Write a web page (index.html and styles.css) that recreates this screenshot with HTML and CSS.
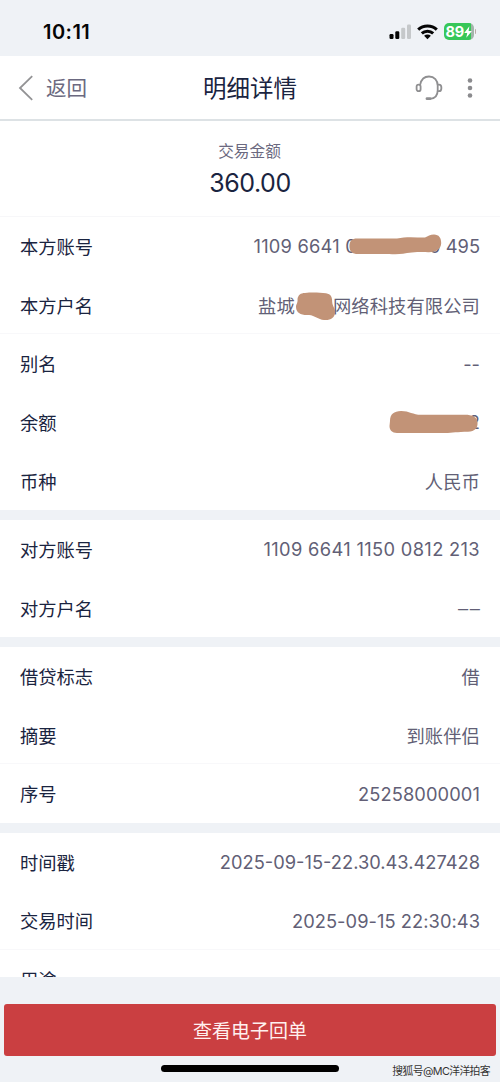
FILE: index.html
```html
<!DOCTYPE html>
<html lang="zh-CN">
<head>
<meta charset="utf-8">
<title>明细详情</title>
<link rel="stylesheet" href="styles.css">
</head>
<body>
<div class="screen">
  <div class="status">
    <span class="clock">10:11</span>
    <svg class="signal" width="24" height="16" viewBox="0 0 24 16">
      <rect x="0.5" y="10" width="4" height="5" rx="1.2" fill="#050505"/>
      <rect x="6.3" y="7.2" width="4" height="7.8" rx="1.2" fill="#050505"/>
      <rect x="12.2" y="3.8" width="4" height="11.2" rx="1.2" fill="#c5c8ca"/>
      <rect x="18" y="0.5" width="4" height="14.5" rx="1.2" fill="#c5c8ca"/>
    </svg>
    <svg class="wifi" width="21" height="16" viewBox="0 0 21 16">
      <g fill="none" stroke="#050505" stroke-width="3">
        <path d="M1.2 5.7C6.4 .7 14.6 .7 19.8 5.7"/>
        <path d="M4.8 9.4C8 6.4 13 6.4 16.2 9.4"/>
      </g>
      <path d="M7.1 11.8C9 10.1 12 10.1 13.9 11.8L10.5 15.2Z" fill="#050505"/>
    </svg>
    <div class="battery">
      <span>89</span>
      <svg width="8" height="12" viewBox="0 0 8 12"><path d="M5.4 0.3L0.2 6.9H3.2L2.3 11.7L7.9 4.9H4.6Z" fill="#fff"/></svg>
    </div>
    <i class="battery-tip"></i>
  </div>

  <div class="nav">
    <div class="back">
      <svg width="16" height="26" viewBox="0 0 16 26"><path d="M14.2 1.2L2 13L14.2 24.8" fill="none" stroke="#939395" stroke-width="1.8"/></svg>
      <span>返回</span>
    </div>
    <h1>明细详情</h1>
    <div class="actions">
      <svg width="28" height="26" viewBox="0 0 28 26">
        <g fill="none" stroke="#8f8f91" stroke-width="1.8" stroke-linecap="round">
          <path d="M5.2 9.7C6.2 4.5 9.6 1.5 14 1.5C19.4 1.5 22.7 5.3 22.7 10.6V15.2C22.7 20.6 19.6 23.5 15 23.8"/>
          <rect x="1.6" y="9.6" width="4" height="6.6" rx="2"/>
          <path d="M22.8 9.6H24C25.6 9.6 26.4 10.8 26.4 12.9S25.6 16.2 24 16.2H22.8"/>
        </g>
        <path d="M12 23.7H15" stroke="#8f8f91" stroke-width="2.8" stroke-linecap="round"/>
      </svg>
      <svg class="more" width="6" height="20" viewBox="0 0 6 20" fill="#8b8b8e"><circle cx="3" cy="2.5" r="2.3"/><circle cx="3" cy="10" r="2.3"/><circle cx="3" cy="17.5" r="2.3"/></svg>
    </div>
  </div>

  <div class="content">
    <div class="amount">
      <div class="caption">交易金额</div>
      <div class="sum">360.00</div>
    </div>

    <div class="group">
      <div class="row"><span class="label">本方账号</span>
        <div class="value masked account"><span class="head">1109 6641 0</span><span>0 495</span>
          <svg class="mask mask-account" width="94" height="21" viewBox="0 0 94 21"><path d="M9 4.5H49C58 2.5 67 3.5 77 3.5C80 2 82 .5 86 .5C91 .5 93.2 4 93.2 9C93.2 15 88 18.5 80 18.2C71 17.8 61 18.5 55 19.7C50 20.5 43 20 34 20H10C4.2 20 1.4 17.3 1.4 12.2S4 4.5 9 4.5Z" fill="#c29377"/></svg>
        </div>
      </div>
      <div class="row line"><span class="label">本方户名</span>
        <div class="value text masked holder"><span>盐城</span><span>网络科技有限公司</span>
          <svg class="mask mask-name" width="42" height="29" viewBox="0 0 42 29"><path d="M10 1C17 .2 25 .7 31 1.2C36 2 37.2 5 37.2 10C37.4 14 40.2 16.4 40.2 20C39.8 26 35.5 28.5 29 28C23 27.5 20 23.5 14 23C6 23.5 1.2 21 1 15C1 12 3 11 2.5 7C3.2 3 5.5 1 10 1Z" fill="#c29377"/></svg>
        </div>
      </div>
      <div class="row"><span class="label">别名</span><div class="value">--</div></div>
      <div class="row"><span class="label">余额</span>
        <div class="value masked">2
          <svg class="mask mask-balance" width="90" height="24" viewBox="0 0 90 24"><path d="M1 11C1 4 5 1 12 .9C20 .8 24 4.7 32 4.8H76C83 4.8 88 7 88.5 12C89 18 86 21.5 79 21.7C68 21.8 64 22.7 56 23H8C3 23 .5 20 .5 16Z" fill="#c29377"/></svg>
        </div>
      </div>
      <div class="row"><span class="label">币种</span><div class="value text">人民币</div></div>
    </div>

    <div class="group">
      <div class="row"><span class="label">对方账号</span><div class="value peer">1109 6641 1150 0812 213</div></div>
      <div class="row"><span class="label">对方户名</span><div class="value longdash">––</div></div>
    </div>

    <div class="group">
      <div class="row"><span class="label">借贷标志</span><div class="value text">借</div></div>
      <div class="row line"><span class="label">摘要</span><div class="value text">到账伴侣</div></div>
      <div class="row"><span class="label">序号</span><div class="value serial">25258000001</div></div>
    </div>

    <div class="group">
      <div class="row"><span class="label">时间戳</span><div class="value">2025-09-15-22.30.43.427428</div></div>
      <div class="row line"><span class="label">交易时间</span><div class="value time">2025-09-15 22:30:43</div></div>
      <div class="row"><span class="label">用途</span></div>
    </div>
  </div>

  <div class="footer">
    <div class="receipt">查看电子回单</div>
    <div class="home"></div>
    <div class="watermark">搜狐号@MC洋洋拍客</div>
  </div>
</div>
</body>
</html>
```
FILE: styles.css
```css
* { box-sizing: border-box; }
body {
  margin: 0;
  background: #eff2f6;
  font-family: Inter, "Noto Sans CJK SC", sans-serif;
  color: #1a2440;
}
svg { display: block; flex: none; }
.screen {
  width: 500px;
  height: 1082px;
  display: flex;
  flex-direction: column;
  overflow: hidden;
}

/* Status bar */
.status {
  height: 56px;
  flex: none;
  display: flex;
  align-items: center;
  padding: 7px 24px 0 43px;
}
.clock {
  font-size: 20px;
  font-weight: 600;
  line-height: 24px;
  color: #050505;
  letter-spacing: 0.45px;
  margin-right: auto;
}
.signal { margin-right: 4px; }
.battery {
  width: 30px;
  height: 17px;
  border-radius: 5px;
  background: linear-gradient(90deg, #37c759 89%, #a3b5aa 89%);
  color: #fff;
  display: flex;
  align-items: center;
  padding-left: 2px;
  margin-left: 6px;
  font-size: 14.5px;
  font-weight: 700;
  line-height: 17px;
  letter-spacing: -0.3px;
}
.battery-tip {
  width: 1.5px;
  height: 5px;
  margin-left: 1px;
  border-radius: 0 2px 2px 0;
  background: #b9a9a6;
}

/* Navigation bar */
.nav {
  height: 65px;
  flex: none;
  display: grid;
  grid-template-columns: 1fr auto 1fr;
  align-items: center;
  padding: 0 27px 0 18px;
  background: #fff;
  border-bottom: 2px solid #dde2e5;
}
.back {
  display: flex;
  align-items: center;
  gap: 12px;
  font-size: 20.5px;
  line-height: 30px;
  color: #6b6980;
}
.back span { padding-top: 2px; }
.nav h1 {
  margin: 0;
  padding: 2px 0 0 9px;
  font-size: 23.5px;
  line-height: 34px;
  font-weight: 400;
}
.actions {
  display: flex;
  align-items: center;
  justify-content: flex-end;
  gap: 24px;
}

/* Transaction details */
.content {
  height: 856px;
  flex: none;
  overflow: hidden;
  display: flex;
  flex-direction: column;
  gap: 9.7px;
}
.amount {
  height: 96px;
  flex: none;
  padding-top: 19px;
  background: #fff;
  border-bottom: 1px solid #f7f7f9;
  text-align: center;
  margin-bottom: -9.7px;
}
.caption {
  font-size: 15.7px;
  line-height: 24px;
  color: #6b6980;
  padding-right: 1px;
}
.sum {
  font-size: 25px;
  line-height: 34px;
  letter-spacing: -0.45px;
  margin-top: 2px;
}
.group { flex: none; background: #fff; }
.row {
  height: 58.67px;
  display: flex;
  align-items: center;
  justify-content: space-between;
  padding: 0 20px;
  font-size: 18.3px;
  line-height: 28px;
}
.row.line { box-shadow: inset 0 -1px #f8f8fa; }
.label, .text { padding-top: 1.5px; }
.value { color: #625f76; white-space: nowrap; }
.text { letter-spacing: 0.1px; }
.peer { letter-spacing: 0.34px; }
.serial { letter-spacing: 0.1px; }
.time { letter-spacing: 0.05px; }
.longdash {
  letter-spacing: 1.6px;
  margin-right: -1.6px;
  font-family: "Liberation Sans", sans-serif;
}
.masked {
  display: flex;
  justify-content: space-between;
  position: relative;
}
.account { width: 226.5px; }
.account .head { letter-spacing: 0.22px; }
.holder { width: 222px; }

/* Marker strokes over private data */
.mask { position: absolute; }
.mask-account { left: 94px; top: 2px; }
.mask-name { left: 36.5px; top: 1.5px; }
.mask-balance { right: 1px; top: 2px; }

/* Footer */
.footer {
  flex: 1;
  padding: 27px 4px 0;
  position: relative;
}
.receipt {
  height: 51.5px;
  padding-top: 1.5px;
  border-radius: 3px;
  background: #ca3f41;
  color: #fff0ef;
  text-align: center;
  font-size: 19px;
  line-height: 51px;
}
.home {
  width: 178px;
  height: 7px;
  margin: 9.5px auto 0;
  border-radius: 4px;
  background: #000;
}
.watermark {
  position: absolute;
  right: 10px;
  bottom: 2px;
  font-size: 10.8px;
  line-height: 16px;
  letter-spacing: -0.6px;
  color: #333;
  text-shadow: 0 0 1px #fff;
}
```
